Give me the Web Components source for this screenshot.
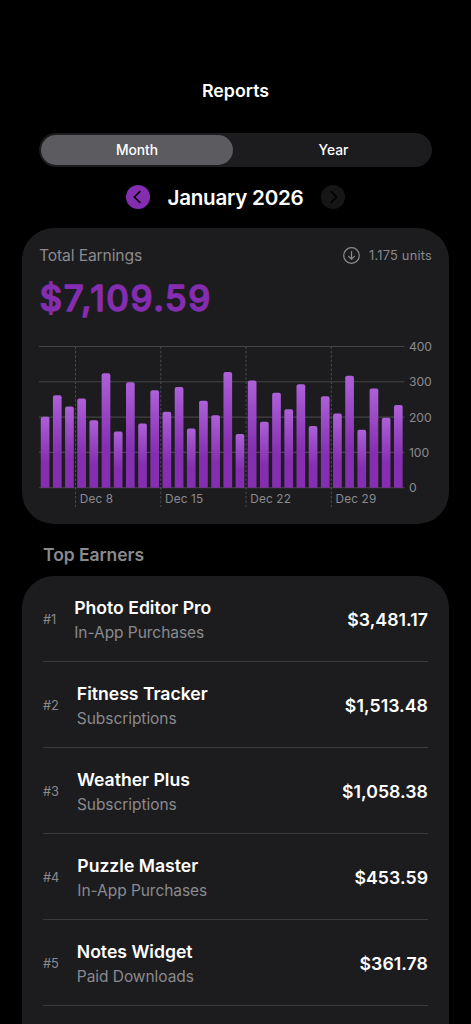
<!DOCTYPE html>
<html lang="en">
<head>
    <meta charset="UTF-8">
    <meta name="viewport" content="width=device-width, initial-scale=1.0">
    <title>Reports</title>
    <style>
        body {
            margin: 0;
            height: 1024px;
            overflow: hidden;
            background: #000;
            color: #fff;
            font-family: Inter, "Liberation Sans", sans-serif;
            --accent: #842db0;
            --card: #1c1c1e;
            --muted: #8a8a8e;
            --line: #3a3a3c;
        }
    </style>
</head>
<body>
    <report-page heading="Reports">
        <segment-control slot="controls">
            <segment-item selected>Month</segment-item>
            <segment-item>Year</segment-item>
        </segment-control>
        <month-stepper slot="controls">January 2026</month-stepper>
        <earnings-card amount="$7,109.59">
            <span slot="title">Total Earnings</span>
            <span slot="units">1.175 units</span>
            <bar-chart
                values="201,262,230,253,191,324,159,299,182,276,215,285,168,246,205,328,152,304,187,269,222,293,175,259,210,317,164,281,198,234"
                ticks="3:Dec 8,10:Dec 15,17:Dec 22,24:Dec 29" max="400"></bar-chart>
        </earnings-card>
        <earner-list heading="Top Earners">
            <earner-row rank="#1" amount="$3,481.17">Photo Editor Pro<span slot="kind">In-App Purchases</span></earner-row>
            <earner-row rank="#2" amount="$1,513.48">Fitness Tracker<span slot="kind">Subscriptions</span></earner-row>
            <earner-row rank="#3" amount="$1,058.38">Weather Plus<span slot="kind">Subscriptions</span></earner-row>
            <earner-row rank="#4" amount="$453.59">Puzzle Master<span slot="kind">In-App Purchases</span></earner-row>
            <earner-row rank="#5" amount="$361.78">Notes Widget<span slot="kind">Paid Downloads</span></earner-row>
        </earner-list>
    </report-page>

    <script>
        class BaseElement extends HTMLElement {
            constructor() {
                super()
                this.attachShadow({mode: 'open'})
            }
            connectedCallback() {
                this.shadowRoot.innerHTML = this.render()
            }
            attr(name) {
                return this.getAttribute(name) || ''
            }
        }

        class ReportPage extends BaseElement {
            render() {
                return `
                    <style>
                        :host { display: flex; flex-direction: column; box-sizing: border-box; height: 1024px; overflow: hidden; padding: 78px 22px 0; }
                        h1 { margin: 0; font-size: 17.8px; line-height: 26px; font-weight: 560; text-align: center; letter-spacing: 0; }
                        .controls { display: flex; flex-direction: column; padding: 29px 17px 17px; gap: 16px; }
                    </style>
                    <h1>${this.attr('heading')}</h1>
                    <div class="controls"><slot name="controls"></slot></div>
                    <slot></slot>
                `
            }
        }

        class SegmentControl extends BaseElement {
            render() {
                return `
                    <style>
                        :host { display: flex; gap: 4px; box-sizing: border-box; height: 34px; padding: 2px; border-radius: 17px; background: var(--card); }
                    </style>
                    <slot></slot>
                `
            }
        }

        class SegmentItem extends BaseElement {
            render() {
                return `
                    <style>
                        :host { flex: 1; display: flex; align-items: center; justify-content: center; border-radius: 15px; font-size: 13.8px; line-height: 30px; font-weight: 500; }
                        :host([selected]) { flex: 0 0 192px; background: #5b5b60; }
                    </style>
                    <slot></slot>
                `
            }
        }

        class MonthStepper extends BaseElement {
            render() {
                return `
                    <style>
                        :host { display: flex; align-items: center; justify-content: center; gap: 17px; height: 28px; font-size: 20.6px; font-weight: 560; letter-spacing: -0.25px; white-space: nowrap; }
                        svg { display: block; width: 24px; height: 24px; }
                        path { fill: none; stroke: #000; stroke-width: 1.7; stroke-linecap: round; stroke-linejoin: round; }
                    </style>
                    <svg viewBox="0 0 24 24"><circle cx="12" cy="12" r="12" fill="var(--accent)"/><path d="M13.8 6.7 8.3 12l5.5 5.3"/></svg>
                    <slot></slot>
                    <svg viewBox="0 0 24 24"><circle cx="12" cy="12" r="12" fill="#161617"/><path d="M10.2 6.7l5.5 5.3-5.5 5.3"/></svg>
                `
            }
        }

        class EarningsCard extends BaseElement {
            render() {
                return `
                    <style>
                        :host { display: flex; flex-direction: column; flex-shrink: 0; box-sizing: border-box; height: 296px; padding: 17px 17px 0; border-radius: 32px; background: var(--card); color: var(--muted); }
                        .head { display: flex; align-items: center; height: 20px; font-size: 15.7px; letter-spacing: -0.15px; }
                        .units { display: flex; align-items: center; gap: 9px; margin-left: auto; font-size: 12.8px; letter-spacing: 0.22px; }
                        .icon { width: 17px; height: 17px; fill: none; stroke: currentColor; stroke-width: 1.2; stroke-linecap: round; stroke-linejoin: round; }
                        .amount { display: block; margin-top: 12px; width: 200px; height: 44px; overflow: visible; }
                        /* the round-joined outline softens the corners of the digits */
                        .amount text { font-size: 35px; font-weight: 500; letter-spacing: 1.6px; fill: var(--accent); stroke: var(--accent); stroke-width: 1.4; stroke-linejoin: round; }
                        ::slotted(bar-chart) { margin-top: 18px; }
                    </style>
                    <div class="head">
                        <slot name="title"></slot>
                        <div class="units">
                            <svg class="icon" viewBox="0 0 17 17"><circle cx="8.5" cy="8.5" r="7.8"/><path d="M8.5 4.6v7.4M5.6 9.4l2.9 2.8 2.9-2.8"/></svg>
                            <slot name="units"></slot>
                        </div>
                    </div>
                    <svg class="amount"><text x="0.6" y="34.4">${this.attr('amount')}</text></svg>
                    <slot></slot>
                `
            }
        }

        class BarChart extends BaseElement {
            render() {
                const values = this.attr('values').split(',').map(Number)
                const max = Number(this.attr('max'))
                const top = 7.5
                const height = 141.2
                const plotWidth = 365.4
                const step = plotWidth / values.length
                const barWidth = 8.7
                const base = top + height
                let grid = ''
                for (let v = 0; v <= max; v += 100) {
                    const y = base - v / max * height
                    grid += `<line class="grid" x1="0" x2="${plotWidth}" y1="${y}" y2="${y}"/>
                        <text class="y" x="370" y="${y + 4.6}">${v}</text>`
                }
                const ticks = this.attr('ticks').split(',').map(t => {
                    const [index, label] = t.split(':')
                    const x = index * step
                    return `<line class="tick" x1="${x}" x2="${x}" y1="${top}" y2="168"/>
                        <text class="x" x="${x + 4.2}" y="164.4">${label}</text>`
                }).join('')
                // only the top corners are rounded
                const bars = values.map((v, i) => {
                    const x = i * step + (step - barWidth) / 2
                    const h = v / max * height
                    return `<path fill="url(#bar)" d="M${x} ${base}v${2 - h}q0-2 2-2h${barWidth - 4}q2 0 2 2v${h - 2}z"/>`
                }).join('')
                return `
                    <style>
                        :host { display: block; }
                        svg { display: block; width: 393px; height: 170px; }
                        .grid { stroke: #434345; stroke-width: 1.1; }
                        .tick { stroke: #4c4c4e; stroke-dasharray: 2.4 2; }
                        text { fill: var(--muted); }
                        .y { font-size: 12.2px; letter-spacing: -0.1px; }
                        .x { font-size: 11.8px; letter-spacing: 0.15px; }
                    </style>
                    <svg viewBox="0 0 393 170">
                        <defs>
                            <linearGradient id="bar" x1="0" y1="0" x2="0" y2="1">
                                <stop offset="0" stop-color="#ad60d8"/>
                                <stop offset="0.65" stop-color="#852eb1"/>
                                <stop offset="1" stop-color="#852eb1"/>
                            </linearGradient>
                        </defs>
                        ${grid}${ticks}${bars}
                    </svg>
                `
            }
        }

        class EarnerList extends BaseElement {
            render() {
                return `
                    <style>
                        :host { display: block; }
                        h2 { margin: 0; padding: 18px 21px 9px; font-size: 17.5px; line-height: 25px; font-weight: 560; letter-spacing: -0.05px; color: var(--muted); }
                        .card { box-sizing: border-box; height: 500px; padding: 0 21px; border-radius: 32px; background: var(--card); }
                    </style>
                    <h2>${this.attr('heading')}</h2>
                    <div class="card"><slot></slot></div>
                `
            }
        }

        class EarnerRow extends BaseElement {
            render() {
                return `
                    <style>
                        :host { display: flex; align-items: center; gap: 18px; box-sizing: border-box; height: 86px; padding-top: 2px; border-bottom: 1px solid var(--line); }
                        .rank { font-size: 12.8px; letter-spacing: -0.05px; color: var(--muted); }
                        .name { font-size: 17.6px; line-height: 25px; font-weight: 560; }
                        .kind { font-size: 15.5px; line-height: 25px; letter-spacing: -0.05px; color: var(--muted); }
                        .amount { margin-left: auto; font-size: 17.7px; font-weight: 560; letter-spacing: 0.05px; }
                    </style>
                    <span class="rank">${this.attr('rank')}</span>
                    <div>
                        <div class="name"><slot></slot></div>
                        <div class="kind"><slot name="kind"></slot></div>
                    </div>
                    <span class="amount">${this.attr('amount')}</span>
                `
            }
        }

        customElements.define('report-page', ReportPage)
        customElements.define('segment-control', SegmentControl)
        customElements.define('segment-item', SegmentItem)
        customElements.define('month-stepper', MonthStepper)
        customElements.define('earnings-card', EarningsCard)
        customElements.define('bar-chart', BarChart)
        customElements.define('earner-list', EarnerList)
        customElements.define('earner-row', EarnerRow)
    </script>
</body>
</html>
